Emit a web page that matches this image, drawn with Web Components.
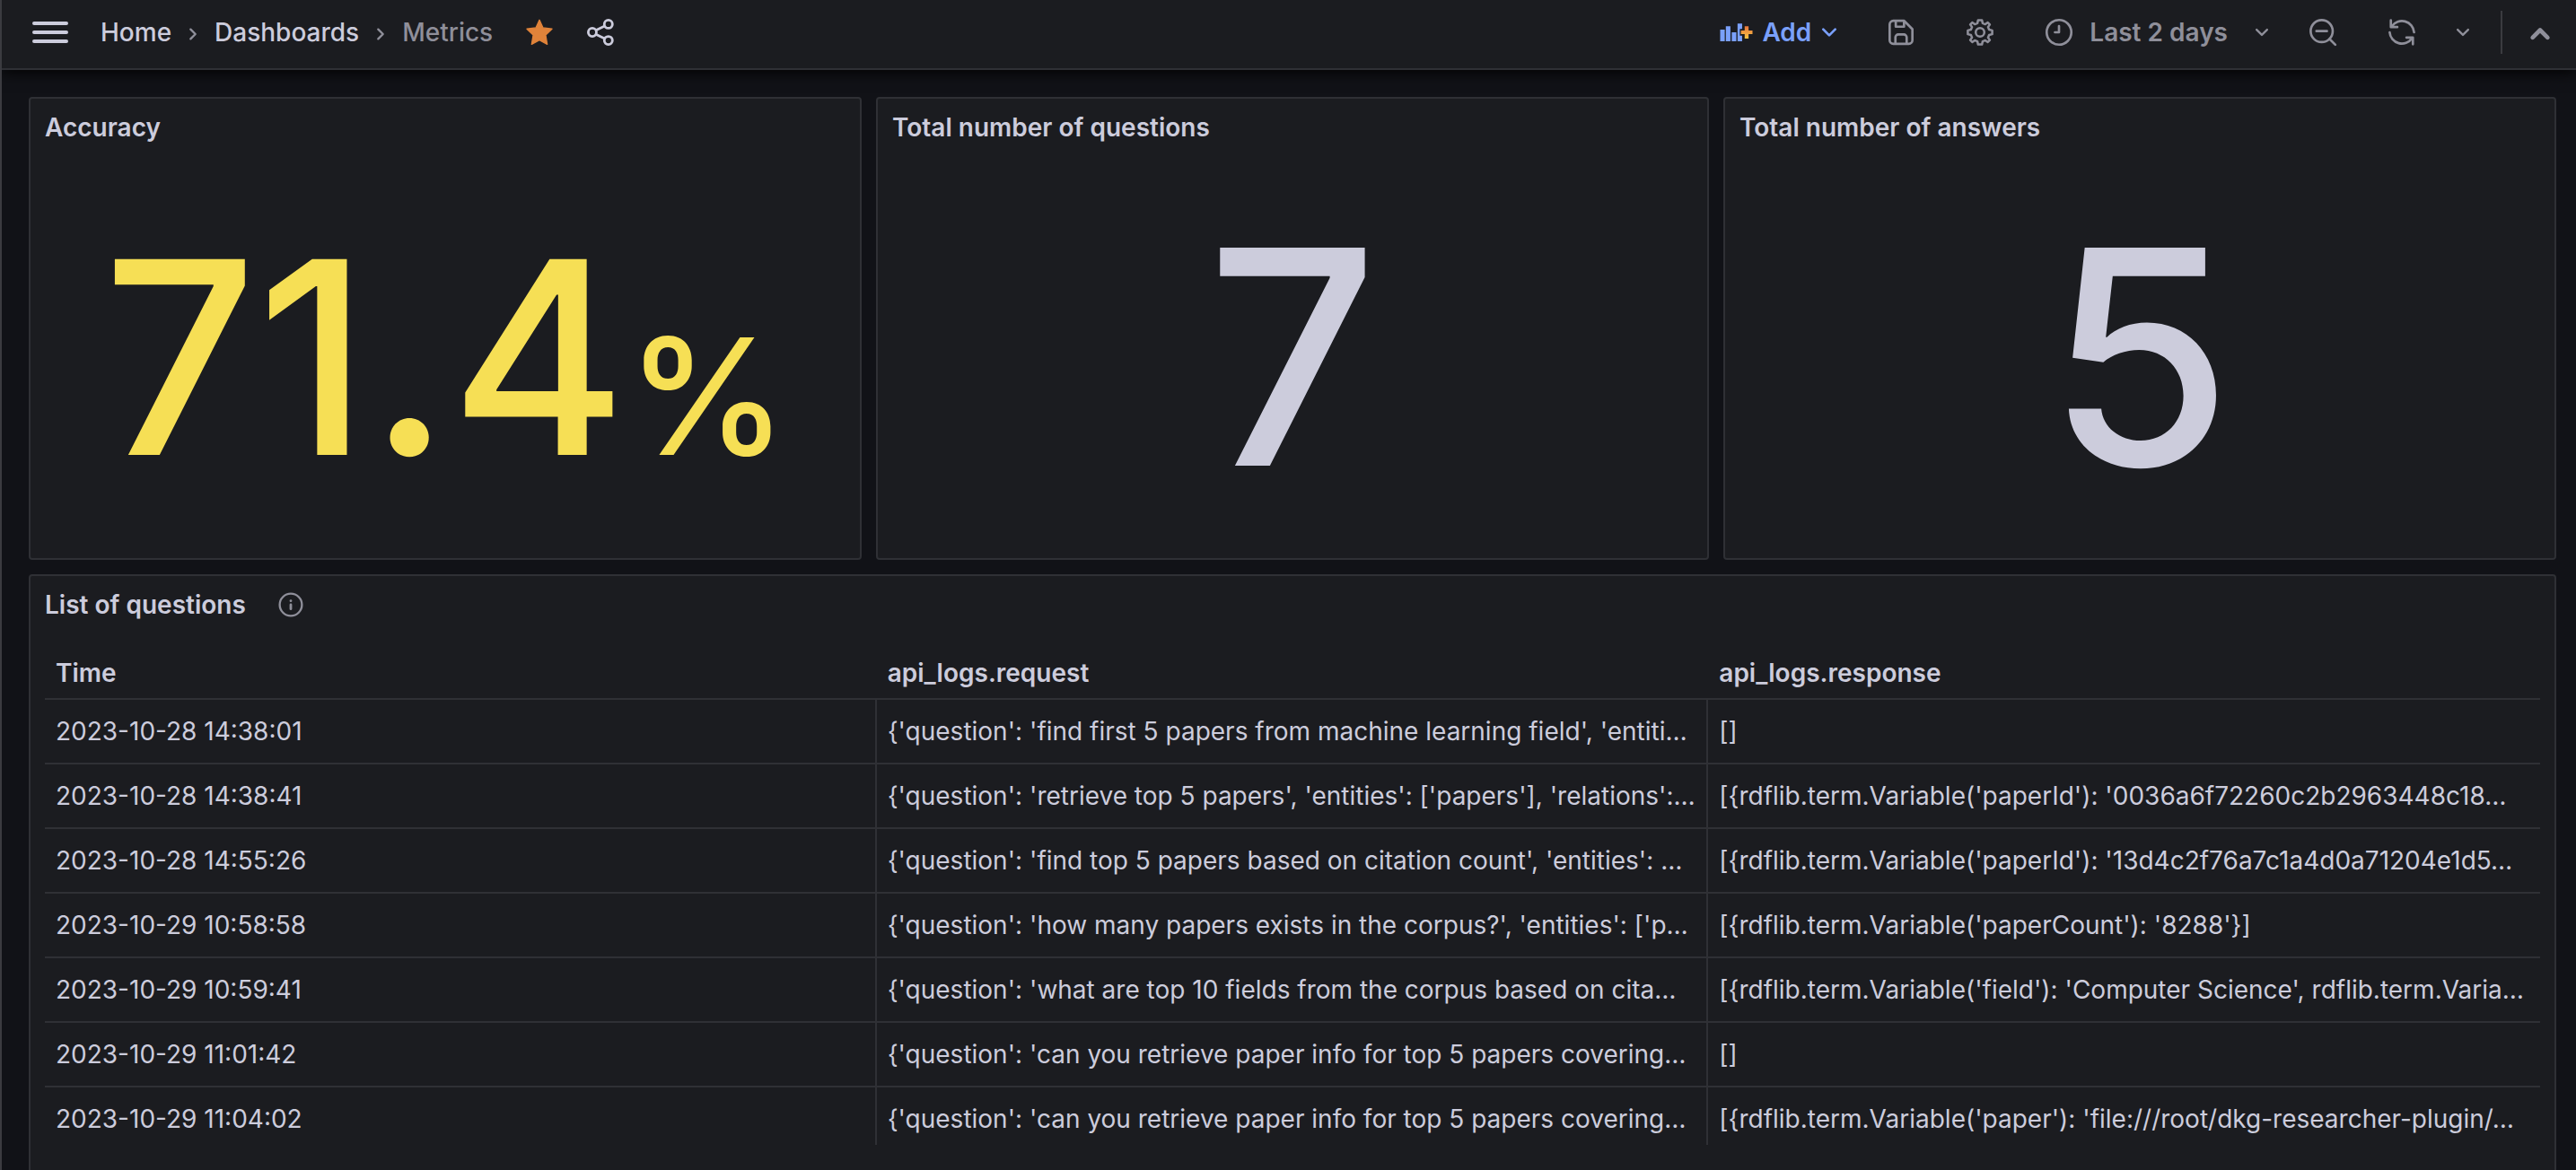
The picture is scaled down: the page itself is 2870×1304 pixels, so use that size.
<!DOCTYPE html>
<html lang="en">
<head>
<meta charset="utf-8">
<title>Metrics</title>
<style>
  html, body { margin: 0; height: 100%; }
  body {
    --canvas: #111217; --panel: #1b1c20; --line: #2f3035;
    --text: #ccccdc; --muted: #8f8f9a; --link: #7aa0fb;
    box-sizing: border-box; height: 100vh; overflow: hidden;
    background: var(--canvas); color: var(--text);
    font: 400 28px/44px Inter, "Noto Sans", sans-serif;
  }
</style>
</head>
<body>
<dash-app></dash-app>

<template id="t-app">
  <style>
    :host { display: flex; flex-direction: column; height: 100%; box-sizing: border-box; border-left: 2px solid #3b3b40; overflow: hidden; }
    main { flex: 1; min-height: 0; display: flex; flex-direction: column; gap: 16px; padding: 30px 22px 0 30px; }
    .stats { display: grid; grid-template-columns: repeat(3, minmax(0, 1fr)); gap: 16px; height: 516px; flex: none; }
    .list { flex: none; height: 700px; }
  </style>
  <dash-toolbar></dash-toolbar>
  <main>
    <div class="stats">
      <dash-panel heading="Accuracy"><big-stat class="yellow">71.4<span slot="unit">%</span></big-stat></dash-panel>
      <dash-panel heading="Total number of questions"><big-stat class="solo">7</big-stat></dash-panel>
      <dash-panel heading="Total number of answers"><big-stat class="solo">5</big-stat></dash-panel>
    </div>
    <dash-panel class="list" heading="List of questions" info><log-table></log-table></dash-panel>
  </main>
</template>

<template id="t-toolbar">
  <style>
    :host { display: flex; align-items: center; flex: none; height: 76px; border-bottom: 2px solid var(--line); background: var(--panel); box-shadow: 0 2px 16px #000; position: relative; }
    button { display: flex; align-items: center; justify-content: center; border: 0; padding: 0; background: none; color: var(--muted); font: inherit; font-weight: 600; height: 64px; margin: 0 0 4px; cursor: pointer; }
    nav { display: flex; align-items: center; margin: 0 36px 4px 32px; font-weight: 500; }
    ol { display: flex; align-items: center; list-style: none; margin: 0; padding: 0; }
    li { display: flex; align-items: center; }
    a { color: var(--text); text-decoration: none; }
    .here a { color: var(--muted); }
    .sep { width: 48px; justify-content: center; color: var(--muted); }
    .menu { margin-left: 30px; color: var(--text); }
    .share { color: var(--text); margin-left: 36px; }
    .star { color: #e0833a; }
    .tools { display: flex; align-items: center; margin-left: auto; }
    .icon { width: 88px; }
    .add { color: var(--link); gap: 4px; margin-right: 20px; }
    .add ui-icon:first-child { margin-right: 8px; }
    .time { gap: 18px; margin-left: 28px; margin-right: 10px; }
    .time ui-icon:last-child { margin-left: 6px; }
    .pick { width: 48px; }
    .rule { width: 2px; height: 48px; background: #3b3b40; margin: 0 18px 4px; }
    .up { width: 48px; margin-right: 16px; }
  </style>
  <button class="menu" aria-label="Open menu"><ui-icon name="menu" size="48"></ui-icon></button>
  <nav aria-label="Breadcrumbs"><ol>
    <li><a href="#home">Home</a></li>
    <li class="sep" aria-hidden="true"><ui-icon name="right" size="32"></ui-icon></li>
    <li><a href="#dashboards">Dashboards</a></li>
    <li class="sep" aria-hidden="true"><ui-icon name="right" size="32"></ui-icon></li>
    <li class="here"><a href="#metrics" aria-current="page">Metrics</a></li>
  </ol></nav>
  <button class="star" aria-label="Unmark as favorite"><ui-icon name="star" size="32"></ui-icon></button>
  <button class="share" aria-label="Share dashboard"><ui-icon name="share" size="32"></ui-icon></button>
  <div class="tools">
    <button class="add"><ui-icon name="addpanel" size="36"></ui-icon>Add<ui-icon name="down" size="32"></ui-icon></button>
    <button class="icon" aria-label="Save dashboard"><ui-icon name="save" size="32"></ui-icon></button>
    <button class="icon" aria-label="Dashboard settings"><ui-icon name="cog" size="32"></ui-icon></button>
    <button class="time"><ui-icon name="clock" size="32"></ui-icon>Last 2 days<ui-icon name="down" size="28"></ui-icon></button>
    <button class="icon" aria-label="Zoom out time range"><ui-icon name="zoomout" size="32"></ui-icon></button>
    <button class="icon" aria-label="Refresh dashboard"><ui-icon name="sync" size="32"></ui-icon></button>
    <button class="pick" aria-label="Choose refresh interval"><ui-icon name="down" size="28"></ui-icon></button>
    <span class="rule"></span>
    <button class="up" aria-label="Toggle top search bar"><ui-icon name="up" size="40"></ui-icon></button>
  </div>
</template>

<template id="t-panel">
  <style>
    :host { display: flex; flex-direction: column; box-sizing: border-box; border: 2px solid var(--line); border-radius: 4px; background: var(--panel); min-width: 0; }
    header { display: flex; align-items: center; height: 64px; padding: 0 16px; gap: 36px; flex: none; }
    h2 { margin: 0; font: inherit; font-weight: 600; }
    ui-icon { color: var(--muted); }
    .body { flex: 1; min-height: 0; display: flex; padding: 0 16px; }
    ::slotted(*) { flex: 1; min-width: 0; }
  </style>
  <header><h2></h2></header>
  <div class="body"><slot></slot></div>
</template>

<template id="t-stat">
  <style>
    :host { display: flex; align-items: center; justify-content: center; --size: 300px; font-weight: 500; color: var(--text); }
    :host(.yellow) { color: #f6df55; }
    :host(.solo) { --size: 334px; }
    p { margin: 0; font-size: var(--size); line-height: 1.2; white-space: nowrap; }
    ::slotted(span) { font-size: 180px; }
  </style>
  <p><slot></slot><slot name="unit"></slot></p>
</template>

<template id="t-table">
  <style>
    :host { display: block; height: 570px; overflow: hidden; }
    table { width: 100%; table-layout: fixed; border-collapse: separate; border-spacing: 0; }
    th, td { box-sizing: border-box; height: 72px; padding: 0 4px 0 12px; text-align: left; border-bottom: 2px solid var(--line); white-space: nowrap; overflow: hidden; }
    th { height: 74px; padding-top: 16px; font-weight: 600; }
    td:not(:last-child) { border-right: 2px solid var(--line); }
  </style>
  <table><thead><tr><th scope="col">Time</th><th scope="col">api_logs.request</th><th scope="col">api_logs.response</th></tr></thead><tbody></tbody></table>
</template>

<script>
  const ICONS = {
    menu: '<path d="M3 7H21M3 12H21M3 17H21" fill="none" stroke="currentColor" stroke-width="2" stroke-linecap="round"/>',
    right: '<path d="M10 9.5L14 13.5L10 17.5" fill="none" stroke="currentColor" stroke-width="1.8" stroke-linecap="round" stroke-linejoin="round"/>',
    down: '<path d="M7 9.5L12 14.5L17 9.5" fill="none" stroke="currentColor" stroke-width="2" stroke-linecap="round" stroke-linejoin="round"/>',
    up: '<path d="M7 15.5L12 10.5L17 15.5" fill="none" stroke="currentColor" stroke-width="2.8" stroke-linecap="round" stroke-linejoin="round"/>',
    star: '<path d="M12 1.7L15 8.2L22.5 9.2L17.2 14.3L18.5 22L12 18.5L5.5 22L6.8 14.3L1.5 9.2L9 8.2Z" fill="currentColor" stroke="currentColor" stroke-width="1" stroke-linejoin="round"/>',
    share: '<g fill="none" stroke="currentColor" stroke-width="2.1"><circle cx="18.6" cy="5.2" r="3.4"/><circle cx="5.2" cy="12" r="3.4"/><circle cx="18.6" cy="18.8" r="3.4"/><path d="M8.2 10.4L15.5 6.8M8.2 13.6L15.5 17.2"/></g>',
    addpanel: '<defs><linearGradient id="g" x1="0" y1="0" x2="0" y2="1"><stop offset="0" stop-color="#e8743b"/><stop offset="1" stop-color="#f6c544"/></linearGradient></defs><path fill="currentColor" d="M1 10H4.4V18.7H1zM5.2 7.5H8.6V18.7H5.2zM9.6 12H13V18.7H9.6zM13.9 5.5H17.3V9.5H15.6V14.5H17.3V18.7H13.9z"/><path fill="url(#g)" d="M19.2 7.5H22.1V10.6H25V13.4H22.1V16.6H19.2V13.4H16.4V10.6H19.2z"/>',
    save: '<g fill="none" stroke="currentColor" stroke-width="2" stroke-linejoin="round"><path d="M5.5 2.4H14.6L21.5 9.4V18.6A3 3 0 0 1 18.5 21.6H5.5A3 3 0 0 1 2.5 18.6V5.4A3 3 0 0 1 5.5 2.4Z"/><path d="M7.6 2.4V7.3H14.5V2.8M7.3 21.5V16.2A2.4 2.4 0 0 1 9.7 13.8H14.3A2.4 2.4 0 0 1 16.7 16.2V21.5"/></g>',
    cog: '<g fill="none" stroke="currentColor" stroke-width="1.9" stroke-linejoin="round"><circle cx="12" cy="12" r="3.6"/><path d="M10.4 1.8H13.6L14.2 4.4L16.4 5.3L18.5 3.8L20.2 5.5L18.7 7.6L19.6 9.8L22.2 10.4V13.6L19.6 14.2L18.7 16.4L20.2 18.5L18.5 20.2L16.4 18.7L14.2 19.6L13.6 22.2H10.4L9.8 19.6L7.6 18.7L5.5 20.2L3.8 18.5L5.3 16.4L4.4 14.2L1.8 13.6V10.4L4.4 9.8L5.3 7.6L3.8 5.5L5.5 3.8L7.6 5.3L9.8 4.4Z"/></g>',
    clock: '<g fill="none" stroke="currentColor" stroke-width="2"><circle cx="12" cy="12" r="10.3"/><path d="M12 6.8V12H8.6" stroke-linecap="round" stroke-linejoin="round"/></g>',
    zoomout: '<g fill="none" stroke="currentColor" stroke-width="2" stroke-linecap="round"><circle cx="11" cy="11" r="9.2"/><path d="M17.6 17.6L22.4 22.4M6.6 11H15.4"/></g>',
    sync: '<g fill="none" stroke="currentColor" stroke-width="2" stroke-linecap="round" stroke-linejoin="round"><path d="M2.8 2V7.6H8.2M3.6 7A10.2 10.2 0 0 1 22.2 12M21.2 22V16.4H15.8M20.4 17A10.2 10.2 0 0 1 1.8 12"/></g>',
    info: '<g fill="none" stroke="currentColor" stroke-width="2" stroke-linecap="round"><circle cx="12" cy="12" r="10.6"/><path d="M12 12V16M12 8.2V8.3" stroke-width="2.4"/></g>'
  };

  const ROWS = [
    ["2023-10-28 14:38:01", "{'question': 'find first 5 papers from machine learning field', 'entiti…", "[]"],
    ["2023-10-28 14:38:41", "{'question': 'retrieve top 5 papers', 'entities': ['papers'], 'relations':…", "[{rdflib.term.Variable('paperId'): '0036a6f72260c2b2963448c18…"],
    ["2023-10-28 14:55:26", "{'question': 'find top 5 papers based on citation count', 'entities': …", "[{rdflib.term.Variable('paperId'): '13d4c2f76a7c1a4d0a71204e1d5…"],
    ["2023-10-29 10:58:58", "{'question': 'how many papers exists in the corpus?', 'entities': ['p…", "[{rdflib.term.Variable('paperCount'): '8288'}]"],
    ["2023-10-29 10:59:41", "{'question': 'what are top 10 fields from the corpus based on cita…", "[{rdflib.term.Variable('field'): 'Computer Science', rdflib.term.Varia…"],
    ["2023-10-29 11:01:42", "{'question': 'can you retrieve paper info for top 5 papers covering…", "[]"],
    ["2023-10-29 11:04:02", "{'question': 'can you retrieve paper info for top 5 papers covering…", "[{rdflib.term.Variable('paper'): 'file:///root/dkg-researcher-plugin/…"]
  ];

  class Base extends HTMLElement {
    constructor() {
      super();
      this.attachShadow({ mode: "open" });
      const t = document.getElementById(this.constructor.template);
      if (t) this.shadowRoot.append(t.content.cloneNode(true));
    }
  }
  class UiIcon extends Base {
    connectedCallback() {
      const s = this.getAttribute("size");
      this.shadowRoot.innerHTML = `<style>:host{display:inline-flex;flex:none}svg{display:block;overflow:visible}</style><svg width="${s}" height="${s}" viewBox="0 0 24 24" aria-hidden="true">${ICONS[this.getAttribute("name")]}</svg>`;
    }
  }
  class DashToolbar extends Base { static template = "t-toolbar"; }
  class BigStat extends Base { static template = "t-stat"; }
  class DashPanel extends Base {
    static template = "t-panel";
    connectedCallback() {
      this.shadowRoot.querySelector("h2").textContent = this.getAttribute("heading");
      if (this.hasAttribute("info") && !this.shadowRoot.querySelector("ui-icon")) {
        const i = document.createElement("ui-icon");
        i.setAttribute("name", "info");
        i.setAttribute("size", "28");
        this.shadowRoot.querySelector("header").append(i);
      }
    }
  }
  class LogTable extends Base {
    static template = "t-table";
    connectedCallback() {
      const body = this.shadowRoot.querySelector("tbody");
      body.replaceChildren(...ROWS.map(cells => {
        const tr = document.createElement("tr");
        tr.append(...cells.map(c => { const td = document.createElement("td"); td.textContent = c; return td; }));
        return tr;
      }));
    }
  }
  class DashApp extends Base { static template = "t-app"; }
  customElements.define("ui-icon", UiIcon);
  customElements.define("dash-toolbar", DashToolbar);
  customElements.define("big-stat", BigStat);
  customElements.define("dash-panel", DashPanel);
  customElements.define("log-table", LogTable);
  customElements.define("dash-app", DashApp);
</script>
</body>
</html>
